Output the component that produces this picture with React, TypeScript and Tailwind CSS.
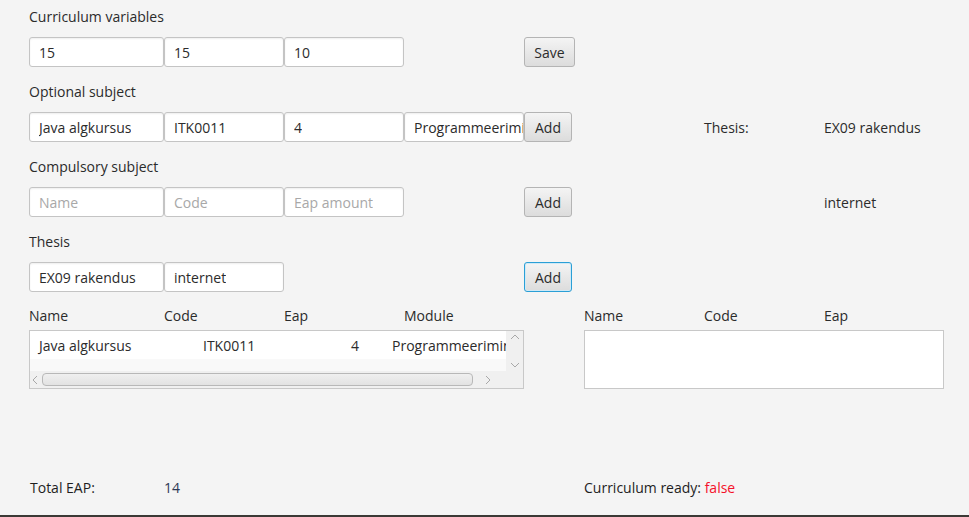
import React from 'react';

const font = { fontFamily: '"Open Sans", "Noto Sans", Arial, sans-serif' };

function Field({ value, placeholder }: { value?: string; placeholder?: string }) {
	return (
		<div className="flex h-[30px] min-w-0 items-center overflow-hidden whitespace-nowrap rounded-[3px] border border-[#c4c4c4] bg-white pl-[9px] shadow-[inset_0_1px_2px_rgba(0,0,0,0.07)]">
			{value ? (
				<span className="block min-w-0 overflow-hidden text-[#2b2b2b]">{value}</span>
			) : (
				<span className="block min-w-0 overflow-hidden text-[#a8a8a8]">{placeholder}</span>
			)}
		</div>
	);
}

function Btn({ label, focused, w }: { label: string; focused?: boolean; w: string }) {
	return (
		<div
			className={`flex h-[30px] items-center justify-center rounded-[3px] border bg-gradient-to-b from-[#f4f4f4] to-[#dcdcdc] text-[#2b2b2b] ${w} ${
				focused ? 'border-[#2a9fd6] shadow-[inset_0_0_0_1px_#cfe9f6]' : 'border-[#b4b4b4]'
			}`}
		>
			{label}
		</div>
	);
}

function Label({ text }: { text: string }) {
	return <div className="col-span-8 flex items-end pb-[11px] leading-[18px] text-[#2b2b2b]">{text}</div>;
}

export default function App() {
	return (
		<div style={font} className="flex h-[517px] w-[969px] flex-col bg-[#f4f4f4] text-[14px]">
			<div className="grid flex-1 grid-cols-[135px_120px_120px_120px_60px_120px_120px_120px] grid-rows-[37px_30px_45px_30px_45px_30px_45px_30px_38px_59px] content-start pl-[29px]">
				<Label text="Curriculum variables" />

				<Field value="15" />
				<Field value="15" />
				<Field value="10" />
				<div />
				<Btn label="Save" w="w-[51px]" />
				<div className="col-span-3" />

				<Label text="Optional subject" />

				<Field value="Java algkursus" />
				<Field value="ITK0011" />
				<Field value="4" />
				<Field value="Programmeerimine" />
				<Btn label="Add" w="w-[48px]" />
				<div />
				<div className="flex items-center text-[#2b2b2b]">Thesis:</div>
				<div className="flex items-center text-[#2b2b2b]">EX09 rakendus</div>

				<Label text="Compulsory subject" />

				<Field placeholder="Name" />
				<Field placeholder="Code" />
				<Field placeholder="Eap amount" />
				<div />
				<Btn label="Add" w="w-[48px]" />
				<div />
				<div />
				<div className="flex items-center text-[#2b2b2b]">internet</div>

				<Label text="Thesis" />

				<Field value="EX09 rakendus" />
				<Field value="internet" />
				<div />
				<div />
				<Btn label="Add" w="w-[48px]" focused />
				<div className="col-span-3" />

				{['Name', 'Code', 'Eap', 'Module', '', 'Name', 'Code', 'Eap'].map((h, i) => (
					<div key={i} className="flex items-end pb-[5px] leading-[18px] text-[#2b2b2b]">
						{h}
					</div>
				))}

				<div className="col-span-4 flex flex-col overflow-hidden border border-[#c8c8c8] bg-white">
					<div className="flex min-h-0 flex-1">
						<div className="flex min-w-0 flex-1 flex-col overflow-hidden">
							<div className="flex h-[28px] items-center whitespace-nowrap text-[#2b2b2b]">
								<span className="w-[173px] shrink-0 pl-[9px]">Java algkursus</span>
								<span className="w-[148px] shrink-0">ITK0011</span>
								<span className="w-[41px] shrink-0">4</span>
								<span className="block min-w-0 overflow-hidden">Programmeerimine</span>
							</div>
							<div className="flex-1 bg-[#f9f9f9]" />
						</div>
						<div className="flex w-[17px] shrink-0 flex-col items-center justify-between bg-[#f0f0f0] py-[2px]">
							<svg width="10" height="8" viewBox="0 0 10 8">
								<path d="M1 6 L5 2 L9 6" fill="none" stroke="#a8a8a8" strokeWidth="1" />
							</svg>
							<svg width="10" height="8" viewBox="0 0 10 8">
								<path d="M1 2 L5 6 L9 2" fill="none" stroke="#a8a8a8" strokeWidth="1" />
							</svg>
						</div>
					</div>
					<div className="flex h-[17px] items-center bg-[#f0f0f0]">
						<svg width="12" height="10" viewBox="0 0 12 10" className="shrink-0">
							<path d="M7 1 L3 5 L7 9" fill="none" stroke="#a8a8a8" strokeWidth="1" />
						</svg>
						<div className="h-[13px] w-[431px] rounded-[4px] border border-[#b8b8b8] bg-gradient-to-b from-[#f0f0f0] to-[#e2e2e2]" />
						<div className="flex flex-1 justify-center pr-[4px]">
							<svg width="10" height="10" viewBox="0 0 10 10">
								<path d="M3 1 L7 5 L3 9" fill="none" stroke="#a8a8a8" strokeWidth="1" />
							</svg>
						</div>
						<div className="w-[17px]" />
					</div>
				</div>
				<div />
				<div className="col-span-3 border border-[#c8c8c8] bg-white" />
			</div>

			<div className="grid h-[36px] grid-cols-[134px_420px_385px] items-start pl-[30px] text-[#1e1e1e]">
				<div className="leading-[18px]">Total EAP:</div>
				<div className="leading-[18px] text-[#2e3a55]">14</div>
				<div className="leading-[18px]">
					Curriculum ready: <span className="text-[#f5102a]">false</span>
				</div>
			</div>
			<div className="h-[2px] bg-[#3b3935]" />
		</div>
	);
}
